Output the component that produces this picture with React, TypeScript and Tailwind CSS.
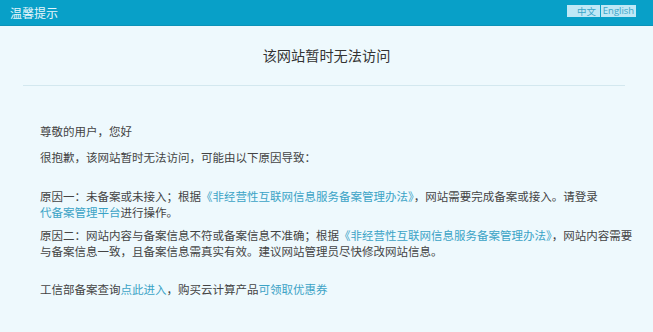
import React from "react";

export default function App() {
  const link = "text-[#3ba3c6]";
  return (
    <div
      className="w-[653px] h-[332px] bg-[#eef9fd] text-[#444] overflow-hidden"
      style={{ fontFamily: '"Noto Sans CJK SC", "Noto Sans", sans-serif' }}
    >
      <div className="h-[26px] bg-[#08a0c8] border-b border-[#0b93b8] flex items-center justify-between pl-[10px] pr-[17px]">
        <span className="text-[12px] text-[#e6f6fb] leading-none">温馨提示</span>
        <div className="flex gap-[1px] h-[12px] -mt-[4px]">
          <span className="w-[33px] bg-[#bfe8f6] text-[#3aa6c8] text-[9.5px] leading-[12px] text-right pr-[4px]">中文</span>
          <span className="w-[35px] bg-[#bfe8f6] text-[#3aa6c8] text-[9.5px] leading-[12px] text-center" style={{ fontFamily: '"Open Sans", sans-serif' }}>English</span>
        </div>
      </div>
      <div className="h-[59px] flex items-center justify-center text-[14.2px] text-[#333]">
        该网站暂时无法访问
      </div>
      <div className="ml-[23px] mr-[28px] h-[1px] bg-[#d3e8ef]" />
      <div className="pl-[40px] pt-[37px] text-[11.5px] leading-[16px]">
        <p>尊敬的用户，您好</p>
        <p className="mt-[10px]">很抱歉，该网站暂时无法访问，可能由以下原因导致：</p>
        <p className="mt-[23px]">
          原因一：未备案或未接入；根据<span className={link}>《非经营性互联网信息服务备案管理办法》</span>，网站需要完成备案或接入。请登录
          <br />
          <span className={link}>代备案管理平台</span>进行操作。
        </p>
        <p className="mt-[7px]">
          原因二：网站内容与备案信息不符或备案信息不准确；根据<span className={link}>《非经营性互联网信息服务备案管理办法》</span>，网站内容需要
          <br />
          与备案信息一致，且备案信息需真实有效。建议网站管理员尽快修改网站信息。
        </p>
        <p className="mt-[22px]">
          工信部备案查询<span className={link}>点此进入</span>，购买云计算产品<span className={link}>可领取优惠券</span>
        </p>
      </div>
    </div>
  );
}
